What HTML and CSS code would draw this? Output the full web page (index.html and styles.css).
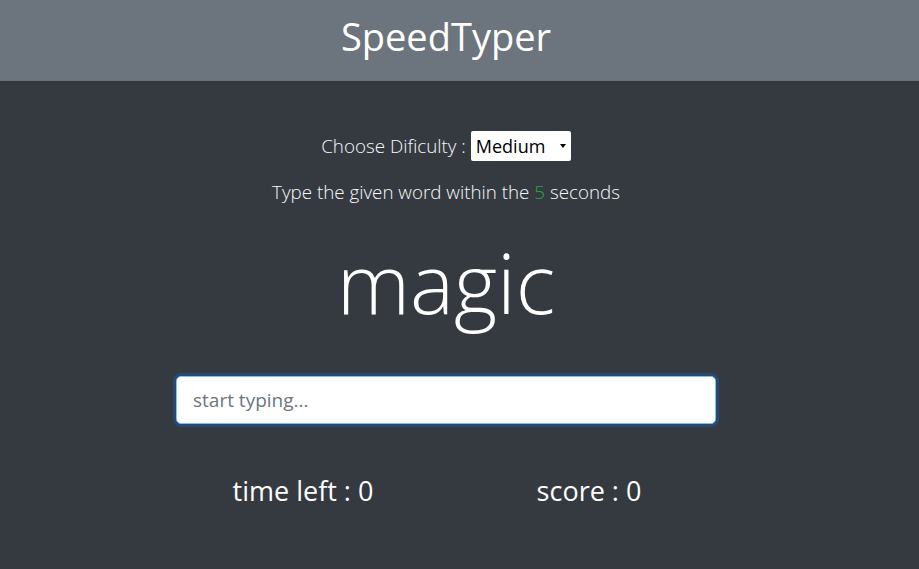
FILE: index.html
```html
<!DOCTYPE html>
<html lang="en">
<head>
<meta charset="utf-8">
<title>SpeedTyper</title>
<link rel="stylesheet" href="styles.css">
</head>
<body>
<header class="topbar">
  <h1 class="brand">SpeedTyper</h1>
</header>
<main class="game">
  <div class="difficulty">
    <label class="difficulty-label" for="level">Choose Dificulty :</label>
    <div class="select">Medium <span class="caret"></span></div>
  </div>
  <p class="hint">Type the given word within the <span class="secs">5</span> seconds</p>
  <h2 class="word">magic</h2>
  <input class="typing" type="text" placeholder="start typing...">
  <div class="stats">
    <h3 class="stat">time left : 0</h3>
    <h3 class="stat">score : 0</h3>
  </div>
</main>
</body>
</html>
```
FILE: styles.css
```css
* { box-sizing: border-box; }
html, body { margin: 0; padding: 0; }
body {
  background: #343a40;
  color: #fff;
  font-family: "Open Sans", "Noto Sans", sans-serif;
  height: 569px;
  overflow: hidden;
}
.topbar {
  background: #6c757d;
  height: 81px;
  display: flex;
  justify-content: center;
  align-items: center;
  padding-right: 27px;
  padding-bottom: 10px;
}
.brand {
  margin: 0;
  font-weight: 400;
  font-size: 38px;
  line-height: 1;
  color: #fff;
}
.game {
  width: 892px;
  display: flex;
  flex-direction: column;
  align-items: center;
  padding-top: 49px;
}
.difficulty {
  display: flex;
  align-items: center;
  gap: 5px;
  height: 31px;
}
.difficulty-label {
  font-size: 18.8px;
  font-weight: 300;
  color: #f8f9fa;
}
.select {
  background: #fff;
  color: #000;
  height: 30px;
  width: 100px;
  font-size: 18px;
  display: flex;
  align-items: center;
  padding-left: 5px;
  border-radius: 2px;
  position: relative;
}
.caret {
  position: absolute;
  right: 5px;
  top: 13px;
  width: 0;
  height: 0;
  border-left: 3.5px solid transparent;
  border-right: 3.5px solid transparent;
  border-top: 4px solid #000;
}
.hint {
  margin: 20px 0 0;
  font-size: 18.8px;
  font-weight: 300;
  color: #f8f9fa;
  line-height: 1.2;
}
.secs { color: #28a745; }
.word {
  margin: 28px 0 0;
  font-size: 83px;
  font-weight: 300;
  line-height: 1.2;
}
.typing {
  margin-top: 45px;
  width: 540px;
  height: 48px;
  border: 1px solid #80bdff;
  border-radius: 5px;
  box-shadow: 0 0 0 3px rgba(0, 123, 255, 0.25);
  padding: 0 16px;
  font-family: inherit;
  font-size: 19px;
  outline: none;
}
.typing::placeholder { color: #6c757d; }
.stats {
  margin-top: 48px;
  display: grid;
  grid-template-columns: 286px 286px;
}
.stat {
  margin: 0;
  font-size: 27px;
  font-weight: 400;
  text-align: center;
}
```
